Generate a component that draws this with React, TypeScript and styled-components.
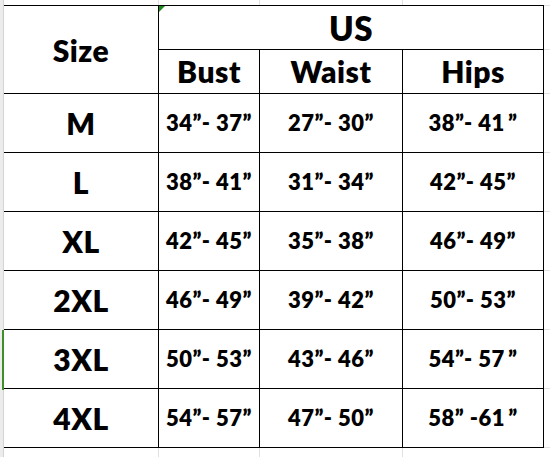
import * as React from "react";
import styled, { createGlobalStyle } from "styled-components";

const GlobalStyle = createGlobalStyle`
  html, body {
    margin: 0;
    padding: 0;
    background: #ffffff;
  }
  body {
    font-family: "Lato", "Liberation Sans", sans-serif;
    color: #000;
  }
`;

const COLS = "154px 100px 142px 140px";
const ROWS = "43px 43px repeat(6, 58px)";

// thin space before some closing quotes, as typed in the sheet
const T = "\u2009";

const rows = [
  { size: "M", bust: "34”- 37”", waist: "27”- 30”", hips: `38”- 41${T}”` },
  { size: "L", bust: "38”- 41”", waist: "31”- 34”", hips: "42”- 45”" },
  { size: "XL", bust: "42”- 45”", waist: "35”- 38”", hips: "46”- 49”" },
  { size: "2XL", bust: "46”- 49”", waist: "39”- 42”", hips: "50”- 53”" },
  { size: "3XL", bust: "50”- 53”", waist: "43”- 46”", hips: `54”- 57${T}”` },
  { size: "4XL", bust: "54”- 57”", waist: "47”- 50”", hips: `58” -61${T}”` },
];

const Page = styled.div`
  display: flex;
  width: 550px;
  height: 457px;
  overflow: hidden;
  background: #fff;
`;

const RowHeaderStrip = styled.div`
  position: relative;
  flex: 0 0 3px;
  background: #ececec;
  border-right: 1px solid #d4d4d4;
`;

const SelectionMark = styled.div`
  position: absolute;
  left: 2px;
  top: 330px;
  width: 2px;
  height: 60px;
  background: #3f8f2a;
`;

const Sheet = styled.div`
  display: flex;
  flex-direction: column;
`;

const Gutter = styled.div<{ $h: number }>`
  display: grid;
  grid-template-columns: 154px 101px 143px 141px;
  height: ${(p) => p.$h}px;
`;

const GutterCell = styled.div<{ $line?: boolean }>`
  border-right: 1px solid ${(p) => (p.$line ? "#e1e1e1" : "transparent")};
  margin-right: -1px;
`;

const Table = styled.div`
  display: grid;
  grid-template-columns: ${COLS};
  grid-template-rows: ${ROWS};
  gap: 1px;
  background: #000;
  padding: 1px 1px 1px 0;
`;

const Cell = styled.div<{ $size?: number }>`
  position: relative;
  background: #fff;
  display: flex;
  align-items: center;
  justify-content: center;
  font-weight: 800;
  font-size: ${(p) => p.$size ?? 22}px;
  white-space: pre;
  letter-spacing: 0.5px;
`;

const SizeHead = styled(Cell)`
  grid-row: 1 / span 2;
  grid-column: 1;
  padding-top: 2px;
`;

const RegionHead = styled(Cell)`
  grid-column: 2 / span 3;
  padding-top: 2px;
`;

const SizeCell = styled(Cell)`
  letter-spacing: 0.5px;
`;

const ErrorFlag = styled.span`
  position: absolute;
  left: 0;
  top: 0;
  width: 0;
  height: 0;
  border-top: 6px solid #1d8a1d;
  border-right: 6px solid transparent;
`;

const RightGutter = styled.div`
  flex: 0 0 6px;
  display: grid;
  grid-template-rows: 6px 44px 44px repeat(6, 59px) 1fr;
  border-right: 1px solid #e1e1e1;
`;

const RightGutterCell = styled.div`
  border-bottom: 1px solid #e1e1e1;
`;

export default function App() {
  return (
    <>
      <GlobalStyle />
      <Page>
        <RowHeaderStrip>
          <SelectionMark />
        </RowHeaderStrip>
        <Sheet>
          <Gutter $h={6}>
            <GutterCell $line />
            <GutterCell $line />
            <GutterCell $line />
            <GutterCell />
          </Gutter>
          <Table>
            <SizeHead $size={30}>Size</SizeHead>
            <RegionHead $size={33}>
              <ErrorFlag />
              US
            </RegionHead>
            <Cell $size={30}>Bust</Cell>
            <Cell $size={30}>Waist</Cell>
            <Cell $size={30}>Hips</Cell>
            {rows.map((r) => (
              <React.Fragment key={r.size}>
                <SizeCell $size={30}>{r.size}</SizeCell>
                <Cell>{r.bust}</Cell>
                <Cell>{r.waist}</Cell>
                <Cell>{r.hips}</Cell>
              </React.Fragment>
            ))}
          </Table>
          <Gutter $h={12}>
            <GutterCell $line />
            <GutterCell $line />
            <GutterCell $line />
            <GutterCell />
          </Gutter>
        </Sheet>
        <RightGutter>
          {Array.from({ length: 9 }).map((_, i) => (
            <RightGutterCell key={i} />
          ))}
        </RightGutter>
      </Page>
    </>
  );
}
